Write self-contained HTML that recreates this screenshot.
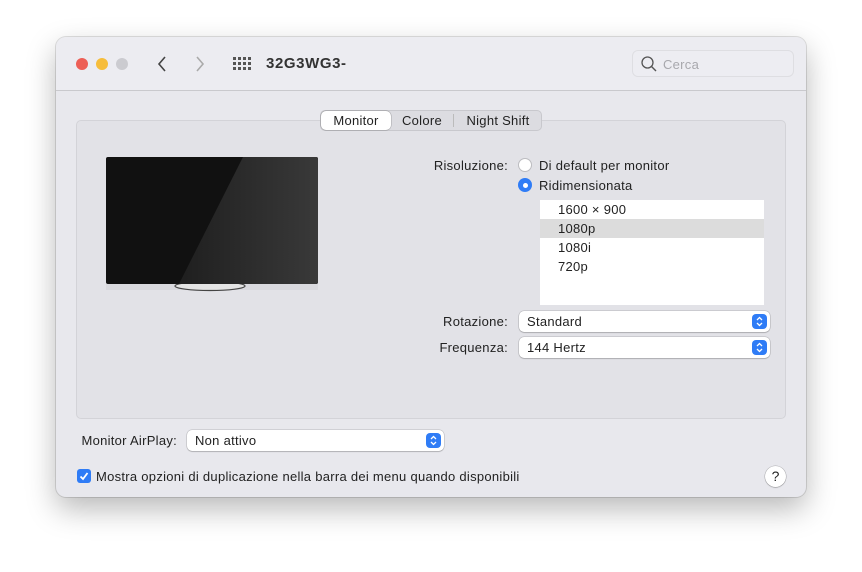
<!DOCTYPE html><html><head><style>
*{box-sizing:border-box;margin:0;padding:0}
body{width:862px;height:572px;background:#fff;font-family:"Liberation Sans",sans-serif;font-size:13px;color:#222;position:relative;overflow:hidden;letter-spacing:.28px}
.win{position:absolute;left:56px;top:37px;width:750px;height:460px;background:#e8e8ed;border-radius:10px;box-shadow:0 12px 30px rgba(0,0,0,.28),0 0 0 1px rgba(0,0,0,.12);overflow:hidden}
.tb{position:absolute;left:0;top:0;width:750px;height:54px;background:#ececf1;border-bottom:1px solid #c9c9cd}
.a{position:absolute}
.dot{position:absolute;top:21px;width:12px;height:12px;border-radius:50%}
.grp{position:absolute;left:20px;top:83px;width:710px;height:299px;background:#e2e2e7;border:1px solid #d3d3d8;border-radius:5px}
.tabs{position:absolute;left:264px;top:73px;height:21px;width:222px;background:#dcdce1;border:1px solid #c8c8cd;border-radius:5px;font-size:13px}
.tab{position:absolute;top:0;height:19px;line-height:19px;text-align:center}
.lbl{position:absolute;text-align:right;font-size:13px}
.pop{position:absolute;height:21px;background:#fff;border-radius:5px;box-shadow:0 0 0 .5px rgba(0,0,0,.2),0 1px 1px rgba(0,0,0,.15);line-height:21px;padding-left:8px}
.arr{position:absolute;right:3px;top:3px;width:15px;height:15px;background:#2f7cf6;border-radius:4px}
</style></head><body>
<div class="win">
<div class="tb">
<div class="dot" style="left:20px;background:#ed5f56"></div>
<div class="dot" style="left:40px;background:#f6bd3b"></div>
<div class="dot" style="left:60px;background:#cbcbd0"></div>
<svg class="a" style="left:100px;top:18px" width="12" height="18"><path d="M9 2L3 9l6 7" stroke="#444" stroke-width="1.6" fill="none"/></svg>
<svg class="a" style="left:138px;top:18px" width="12" height="18"><path d="M3 2l6 7-6 7" stroke="#aaa" stroke-width="1.6" fill="none"/></svg>
<svg class="a" style="left:177px;top:20px" width="18" height="14" fill="#555"><g><rect x="0" y="0" width="3" height="3"/><rect x="5" y="0" width="3" height="3"/><rect x="10" y="0" width="3" height="3"/><rect x="15" y="0" width="3" height="3"/><rect x="0" y="5" width="3" height="3"/><rect x="5" y="5" width="3" height="3"/><rect x="10" y="5" width="3" height="3"/><rect x="15" y="5" width="3" height="3"/><rect x="0" y="10" width="3" height="3"/><rect x="5" y="10" width="3" height="3"/><rect x="10" y="10" width="3" height="3"/><rect x="15" y="10" width="3" height="3"/></g></svg>
<div class="a" style="left:210px;top:18px;font-size:15px;font-weight:bold;color:#333;letter-spacing:.6px">32G3WG3-</div>
<div class="a" style="left:576px;top:13px;width:162px;height:27px;border:1px solid #dedee2;border-radius:6px;background:#ededf2"></div>
<svg class="a" style="left:584px;top:18px" width="18" height="18"><circle cx="7.5" cy="7.5" r="5.5" stroke="#555" stroke-width="1.3" fill="none"/><path d="M11.5 11.5L16 16" stroke="#555" stroke-width="1.4"/></svg>
<div class="a" style="left:607px;top:20px;color:#a8a8ad;font-size:13px">Cerca</div>
</div>
<div class="grp"></div>
<div class="tabs">
<div class="tab" style="left:0;width:70px;background:#fff;border-radius:5px;box-shadow:0 0 0 .5px rgba(0,0,0,.25)">Monitor</div>
<div class="tab" style="left:70px;width:62px">Colore</div>
<div class="a" style="left:132px;top:3px;width:1px;height:13px;background:#bbb"></div>
<div class="tab" style="left:133px;width:88px">Night Shift</div>
</div>
<svg class="a" style="left:50px;top:119px" width="213" height="138">
<defs><linearGradient id="g" x1="0" x2="1"><stop offset="0" stop-color="#1f1f1f"/><stop offset="1" stop-color="#393939"/></linearGradient></defs>
<rect x="0" y="128" width="212" height="6" fill="#d6d6da" opacity=".7"/>
<ellipse cx="104" cy="130" rx="35" ry="4.5" fill="#e4e4e4" stroke="#444" stroke-width="1.2"/>
<rect x="0" y="1" width="212" height="127" rx="2" fill="#111"/>
<path d="M137 1H210a2 2 0 0 1 2 2V126a2 2 0 0 1-2 2H73z" fill="url(#g)"/>
</svg>
<div class="lbl" style="left:352px;top:121px;width:100px">Risoluzione:</div>
<div class="a" style="left:462px;top:121px;width:14px;height:14px;border-radius:50%;background:#fff;border:1px solid #bcbcc0"></div>
<div class="a" style="left:483px;top:121px">Di default per monitor</div>
<div class="a" style="left:462px;top:141px;width:14px;height:14px;border-radius:50%;background:#2f7cf6"><div style="position:absolute;left:4.5px;top:4.5px;width:5px;height:5px;border-radius:50%;background:#fff"></div></div>
<div class="a" style="left:483px;top:141px">Ridimensionata</div>
<div class="a" style="left:484px;top:163px;width:224px;height:105px;background:#fff">
<div style="height:19px;line-height:19px;padding-left:18px">1600 × 900</div>
<div style="height:19px;line-height:19px;padding-left:18px;background:#dcdcdc">1080p</div>
<div style="height:19px;line-height:19px;padding-left:18px">1080i</div>
<div style="height:19px;line-height:19px;padding-left:18px">720p</div>
</div>
<div class="lbl" style="left:352px;top:277px;width:100px">Rotazione:</div>
<div class="pop" style="left:463px;top:274px;width:251px">Standard<svg class="arr" viewBox="0 0 15 15"><path d="M5 6l2.5-2.5L10 6M5 9l2.5 2.5L10 9" stroke="#fff" stroke-width="1.3" fill="none"/></svg></div>
<div class="lbl" style="left:352px;top:303px;width:100px">Frequenza:</div>
<div class="pop" style="left:463px;top:300px;width:251px">144 Hertz<svg class="arr" viewBox="0 0 15 15"><path d="M5 6l2.5-2.5L10 6M5 9l2.5 2.5L10 9" stroke="#fff" stroke-width="1.3" fill="none"/></svg></div>
<div class="lbl" style="left:0px;top:396px;width:121px">Monitor AirPlay:</div>
<div class="pop" style="left:131px;top:393px;width:257px">Non attivo<svg class="arr" viewBox="0 0 15 15"><path d="M5 6l2.5-2.5L10 6M5 9l2.5 2.5L10 9" stroke="#fff" stroke-width="1.3" fill="none"/></svg></div>
<div class="a" style="left:21px;top:432px;width:14px;height:14px;border-radius:3px;background:#2f7cf6"><svg width="14" height="14"><path d="M3.5 7.5l2.5 2.5 4.5-6" stroke="#fff" stroke-width="1.8" fill="none"/></svg></div>
<div class="a" style="left:40px;top:432px">Mostra opzioni di duplicazione nella barra dei menu quando disponibili</div>
<div class="a" style="left:709px;top:429px;width:21px;height:21px;border-radius:50%;background:#fff;box-shadow:0 0 0 .5px rgba(0,0,0,.25),0 1px 1px rgba(0,0,0,.15);text-align:center;line-height:21px;font-size:14px;letter-spacing:0">?</div>
</div>
</body></html>
